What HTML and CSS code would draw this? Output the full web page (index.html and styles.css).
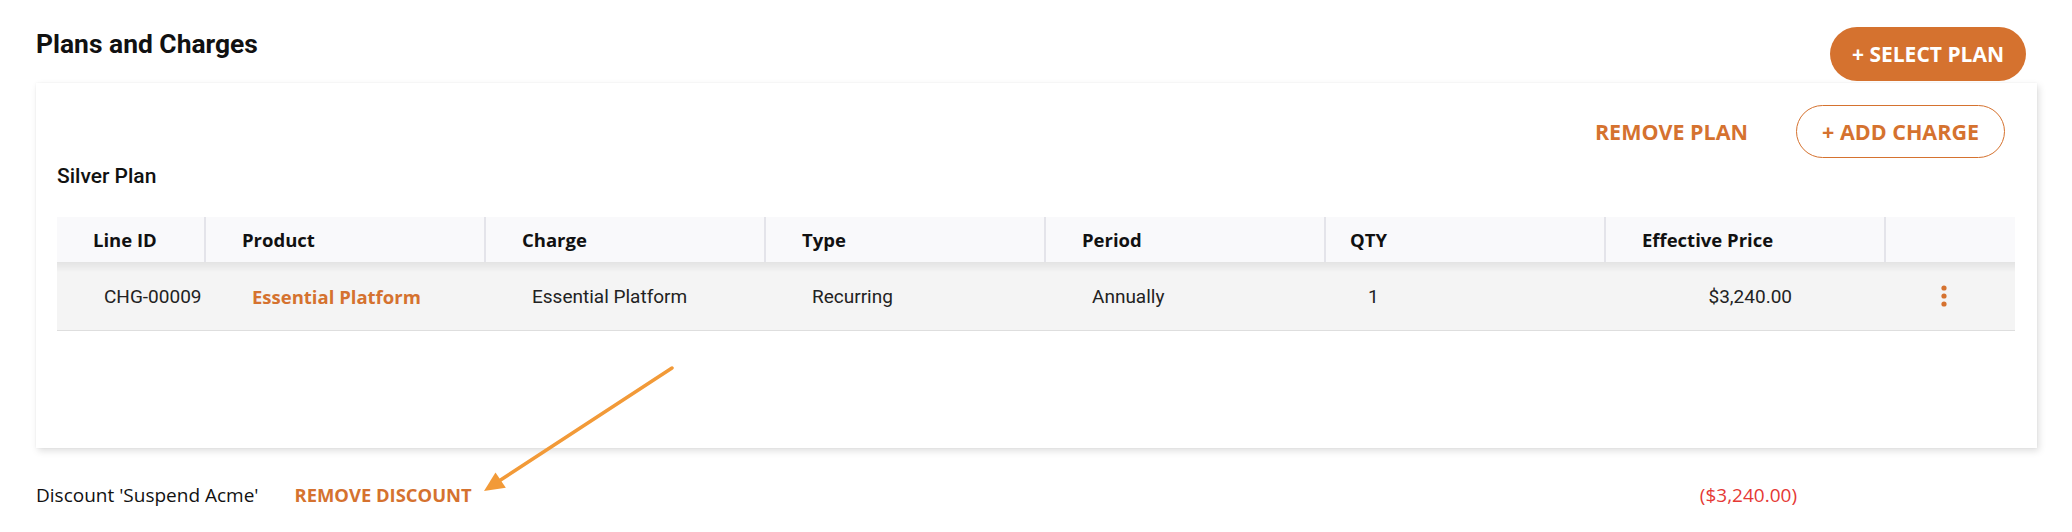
FILE: index.html
```html
<!DOCTYPE html>
<html lang="en">
<head>
    <meta charset="UTF-8">
    <meta name="viewport" content="width=device-width, initial-scale=1.0">
    <title>Plans and Charges</title>
    <link rel="stylesheet" href="styles.css">
</head>
<body>
    <div class="page">
        <div class="section-head">
            <h2 class="section-title">Plans and Charges</h2>
            <button class="btn btn-primary">+ SELECT PLAN</button>
        </div>

        <div class="card">
            <div class="card-toolbar">
                <button class="btn-link">REMOVE PLAN</button>
                <button class="btn btn-outline">+ ADD CHARGE</button>
            </div>
            <h3 class="plan-name">Silver Plan</h3>

            <table class="charges">
                <colgroup>
                    <col class="col-id">
                    <col span="6" class="col-wide">
                    <col class="col-menu">
                </colgroup>
                <thead>
                    <tr>
                        <th>Line ID</th>
                        <th>Product</th>
                        <th>Charge</th>
                        <th>Type</th>
                        <th>Period</th>
                        <th class="qty">QTY</th>
                        <th>Effective Price</th>
                        <th></th>
                    </tr>
                </thead>
                <tbody>
                    <tr>
                        <td>CHG-00009</td>
                        <td><a class="product-link" href="#">Essential Platform</a></td>
                        <td>Essential Platform</td>
                        <td>Recurring</td>
                        <td>Annually</td>
                        <td class="qty">1</td>
                        <td class="price">$3,240.00</td>
                        <td class="menu">
                            <svg class="kebab" width="6" height="22" viewBox="0 0 6 22">
                                <circle cx="3" cy="3" r="2.6"/>
                                <circle cx="3" cy="11" r="2.6"/>
                                <circle cx="3" cy="19" r="2.6"/>
                            </svg>
                        </td>
                    </tr>
                </tbody>
            </table>
        </div>

        <div class="discount-row">
            <span>Discount 'Suspend Acme'</span>
            <button class="btn-link btn-link-sm">REMOVE DISCOUNT</button>
            <span class="discount-amount">($3,240.00)</span>
        </div>

        <!-- callout arrow drawn over the screenshot -->
        <svg class="callout" width="2072" height="532" viewBox="0 0 2072 532">
            <line x1="672" y1="368" x2="499" y2="481" stroke="#f29a38" stroke-width="3.5" stroke-linecap="round"/>
            <polygon points="484,491 495.5,472.5 505.8,487.8" fill="#f29a38"/>
        </svg>
    </div>
</body>
</html>
```

FILE: styles.css
```css
body { margin: 0; padding: 0; background: #fff; font-family: 'Open Sans', sans-serif; color: #1a1a1a; }
.page { position: relative; padding: 27px 35px 0 36px; }

.section-head { display: flex; justify-content: space-between; align-items: flex-start; margin-bottom: 2px; }
.section-title { margin: 2px 0 0; font-family: Roboto, sans-serif; font-size: 26.4px; font-weight: 700; line-height: 30px; color: #111; }

.btn { font-family: 'Open Sans', sans-serif; font-weight: 700; font-size: 21.5px; border-radius: 30px; cursor: pointer; white-space: nowrap; }
.btn-primary { height: 54px; padding: 0 22px; margin-right: 11px; background: #d5722f; color: #fff; border: none; font-size: 21px; }
.btn-outline { height: 53px; padding: 0 25px; background: #fff; color: #d5722f; border: 1px solid #d5722f; }
.btn-link { padding: 0; background: none; border: none; font-family: 'Open Sans', sans-serif; font-weight: 700; font-size: 21.5px; color: #d5722f; cursor: pointer; }
.btn-link-sm { font-size: 18.4px; line-height: 24px; }

.card { background: #fff; padding: 22px 22px 117px 21px; box-shadow: 2px 3px 7px rgba(0, 0, 0, 0.13), 0 0 2px rgba(0, 0, 0, 0.05); }
.card-toolbar { display: flex; justify-content: flex-end; align-items: center; gap: 48px; padding-right: 10px; }
.plan-name { margin: 6px 0 29px; font-family: Roboto, sans-serif; font-size: 21px; font-weight: 500; line-height: 24px; color: #111; }

.charges { width: 1958px; border-collapse: collapse; table-layout: fixed; }
.col-id { width: 148px; }
.col-wide { width: 280px; }
.col-menu { width: 130px; }
.charges th { height: 45px; padding: 0 0 0 36px; background: #f9f9fb; border-right: 2px solid #e4e4ea; text-align: left; font-family: 'Open Sans', sans-serif; font-size: 18.5px; font-weight: 700; color: #111; }
.charges th:last-child { border-right: none; }
.charges th.qty { padding-left: 24px; }
.charges td { height: 68px; padding: 0 0 0 47px; background: linear-gradient(rgba(0, 0, 0, 0.07), rgba(0, 0, 0, 0) 10px), #f4f4f4; border-bottom: 1px solid #dedede; font-family: Roboto, sans-serif; font-size: 19px; color: #222; white-space: nowrap; }
.charges td.qty { padding-left: 43px; }
.charges td.price { padding: 0 93px 0 0; text-align: right; }
.charges td.menu { padding-left: 56px; }
.product-link { font-family: 'Open Sans', sans-serif; font-weight: 700; font-size: 18.5px; color: #d5722f; text-decoration: none; }
.kebab { display: block; fill: #d5722f; }

.discount-row { display: flex; align-items: center; gap: 36px; margin-top: 35px; font-size: 19px; line-height: 24px; color: #111; }
.discount-amount { margin-left: auto; margin-right: 240px; color: #e53935; }

.callout { position: absolute; left: 0; top: 0; pointer-events: none; }
```
